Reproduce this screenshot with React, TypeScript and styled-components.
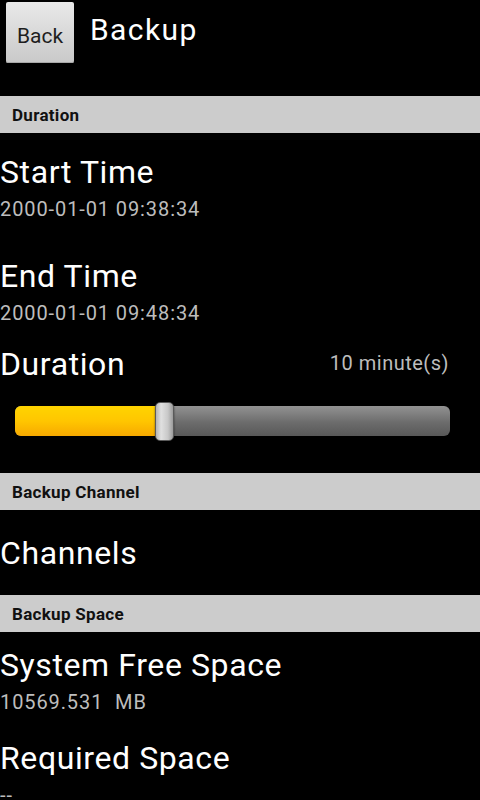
import React from 'react';
import styled, { createGlobalStyle } from 'styled-components';

const GlobalStyle = createGlobalStyle`
  html, body {
    margin: 0;
    padding: 0;
    background: #000;
  }
  body {
    font-family: Roboto, "Noto Sans", "Liberation Sans", sans-serif;
    overflow: hidden;
  }
`;

const Screen = styled.div`
  width: 480px;
  height: 800px;
  background: #000;
  color: #fff;
  overflow: hidden;
`;

const TopBar = styled.div`
  height: 96px;
  display: flex;
  align-items: flex-start;
  padding: 2px 0 0 6px;
  box-sizing: border-box;
  gap: 16px;
`;

const BackButton = styled.button`
  width: 68px;
  height: 61px;
  border: none;
  border-radius: 2px;
  background: linear-gradient(#e9e9e9, #c9c9c9);
  color: #1e1e1e;
  font-family: inherit;
  font-size: 21px;
  padding: 6px 0 0;
  box-shadow: inset 0 -1px 0 #a8a8a8;
`;

const Title = styled.h1`
  margin: 0;
  font-weight: 400;
  font-size: 30px;
  line-height: 36px;
  letter-spacing: 1.4px;
  padding-top: 10px;
`;

const SectionHeader = styled.div`
  height: 37px;
  background: #cccccc;
  color: #111;
  font-weight: 700;
  font-size: 17px;
  letter-spacing: 0.3px;
  line-height: 38px;
  padding-left: 12px;
`;

const Item = styled.div<{ $top: number; $bottom: number }>`
  padding: ${p => p.$top}px 0 ${p => p.$bottom}px;
`;

const ItemHead = styled.div`
  display: flex;
  align-items: flex-start;
  justify-content: space-between;
  padding-right: 31px;
`;

const ItemTitle = styled.div`
  font-size: 32px;
  line-height: 40px;
  letter-spacing: 0.6px;
  color: #fff;
`;

const ItemValue = styled.div`
  font-size: 20px;
  line-height: 24px;
  letter-spacing: 0.9px;
  color: #bdbdbd;
  margin-top: 5px;
`;

const SideValue = styled.span`
  font-size: 20px;
  line-height: 24px;
  padding-top: 7px;
  letter-spacing: 0.5px;
  color: #bdbdbd;
`;

const SliderTrack = styled.div`
  position: relative;
  margin: 22px 30px 0 15px;
  height: 30px;
  border-radius: 6px;
  background: linear-gradient(#929292, #6c6c6c 55%, #585858);
`;

const SliderFill = styled.div`
  height: 100%;
  border-radius: 6px 0 0 6px;
  background: linear-gradient(#ffd400, #ffc600 50%, #f7a900);
`;

const SliderThumb = styled.div`
  position: absolute;
  top: -4px;
  width: 19px;
  height: 39px;
  margin-left: -10px;
  border-radius: 5px;
  border: 1px solid #5a5a5a;
  box-sizing: border-box;
  background: linear-gradient(90deg, #b4b4b4, #e0e0e0 30%, #c8c8c8 70%, #9c9c9c);
  box-shadow: 0 1px 2px rgba(0, 0, 0, 0.6);
`;

const DurationSlider = ({ value, max }: { value: number; max: number }) => {
  const pct = (value / max) * 100;
  return (
    <SliderTrack>
      <SliderFill style={{ width: `${pct}%` }} />
      <SliderThumb style={{ left: `${pct}%` }} />
    </SliderTrack>
  );
};

export default function App() {
  return (
    <Screen>
      <GlobalStyle />
      <TopBar>
        <BackButton>Back</BackButton>
        <Title>Backup</Title>
      </TopBar>

      <SectionHeader>Duration</SectionHeader>
      <Item $top={19} $bottom={16}>
        <ItemTitle>Start Time</ItemTitle>
        <ItemValue>2000-01-01 09:38:34</ItemValue>
      </Item>
      <Item $top={19} $bottom={16}>
        <ItemTitle>End Time</ItemTitle>
        <ItemValue>2000-01-01 09:48:34</ItemValue>
      </Item>
      <Item $top={3} $bottom={37}>
        <ItemHead>
          <ItemTitle>Duration</ItemTitle>
          <SideValue>10 minute(s)</SideValue>
        </ItemHead>
        <DurationSlider value={10} max={29} />
      </Item>

      <SectionHeader>Backup Channel</SectionHeader>
      <Item $top={23} $bottom={22}>
        <ItemTitle>Channels</ItemTitle>
      </Item>

      <SectionHeader>Backup Space</SectionHeader>
      <Item $top={13} $bottom={24}>
        <ItemTitle>System Free Space</ItemTitle>
        <ItemValue>10569.531&nbsp; MB</ItemValue>
      </Item>
      <Item $top={0} $bottom={0}>
        <ItemTitle>Required Space</ItemTitle>
        <ItemValue>--</ItemValue>
      </Item>
    </Screen>
  );
}
